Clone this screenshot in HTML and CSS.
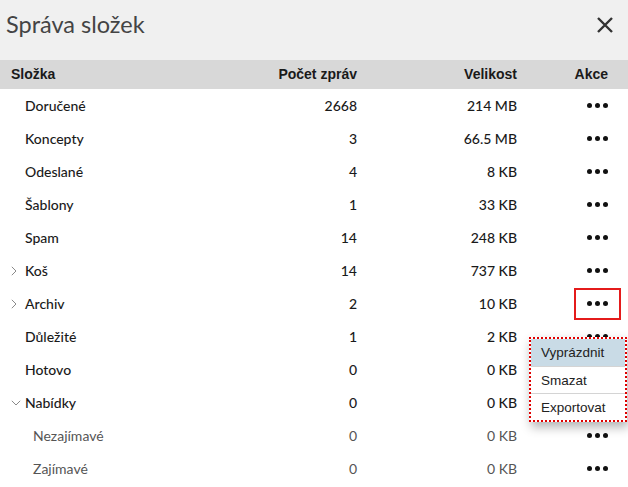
FILE: index.html
```html
<!DOCTYPE html>
<html lang="cs">
<head>
<meta charset="utf-8">
<link rel="stylesheet" href="styles.css">
</head>
<body>
<div class="dialog">
  <div class="titlebar">
    <h1 class="title">Správa složek</h1>
    <button class="close" aria-label="Zavřít">
      <svg width="18" height="18" viewBox="0 0 18 18"><path d="M2 2 L16 16 M16 2 L2 16" stroke="#333" stroke-width="2.4" fill="none"/></svg>
    </button>
  </div>
  <div class="table">
    <div class="row head">
      <div class="c-name">Složka</div>
      <div class="c-count">Počet zpráv</div>
      <div class="c-size">Velikost</div>
      <div class="c-act">Akce</div>
    </div>

    <div class="row"><div class="c-name"><span class="tw"></span>Doručené</div><div class="c-count">2668</div><div class="c-size">214 MB</div><div class="c-act"><span class="dots"><i></i><i></i><i></i></span></div></div>
    <div class="row"><div class="c-name"><span class="tw"></span>Koncepty</div><div class="c-count">3</div><div class="c-size">66.5 MB</div><div class="c-act"><span class="dots"><i></i><i></i><i></i></span></div></div>
    <div class="row"><div class="c-name"><span class="tw"></span>Odeslané</div><div class="c-count">4</div><div class="c-size">8 KB</div><div class="c-act"><span class="dots"><i></i><i></i><i></i></span></div></div>
    <div class="row"><div class="c-name"><span class="tw"></span>Šablony</div><div class="c-count">1</div><div class="c-size">33 KB</div><div class="c-act"><span class="dots"><i></i><i></i><i></i></span></div></div>
    <div class="row"><div class="c-name"><span class="tw"></span>Spam</div><div class="c-count">14</div><div class="c-size">248 KB</div><div class="c-act"><span class="dots"><i></i><i></i><i></i></span></div></div>
    <div class="row"><div class="c-name"><span class="tw"><svg width="6" height="10" viewBox="0 0 6 10"><path d="M0.8 0.8 L5 5 L0.8 9.2" stroke="#8a8a8a" stroke-width="1" fill="none"/></svg></span>Koš</div><div class="c-count">14</div><div class="c-size">737 KB</div><div class="c-act"><span class="dots"><i></i><i></i><i></i></span></div></div>
    <div class="row"><div class="c-name"><span class="tw"><svg width="6" height="10" viewBox="0 0 6 10"><path d="M0.8 0.8 L5 5 L0.8 9.2" stroke="#8a8a8a" stroke-width="1" fill="none"/></svg></span>Archiv</div><div class="c-count">2</div><div class="c-size">10 KB</div><div class="c-act"><span class="dots active"><i></i><i></i><i></i></span></div></div>
    <div class="row"><div class="c-name"><span class="tw"></span>Důležité</div><div class="c-count">1</div><div class="c-size">2 KB</div><div class="c-act"><span class="dots"><i></i><i></i><i></i></span></div></div>
    <div class="row"><div class="c-name"><span class="tw"></span>Hotovo</div><div class="c-count">0</div><div class="c-size">0 KB</div><div class="c-act"><span class="dots"><i></i><i></i><i></i></span></div></div>
    <div class="row"><div class="c-name"><span class="tw"><svg width="10" height="6" viewBox="0 0 10 6"><path d="M0.8 0.8 L5 5 L9.2 0.8" stroke="#8a8a8a" stroke-width="1" fill="none"/></svg></span>Nabídky</div><div class="c-count">0</div><div class="c-size">0 KB</div><div class="c-act"><span class="dots"><i></i><i></i><i></i></span></div></div>
    <div class="row child"><div class="c-name"><span class="tw"></span>Nezajímavé</div><div class="c-count">0</div><div class="c-size">0 KB</div><div class="c-act"><span class="dots"><i></i><i></i><i></i></span></div></div>
    <div class="row child"><div class="c-name"><span class="tw"></span>Zajímavé</div><div class="c-count">0</div><div class="c-size">0 KB</div><div class="c-act"><span class="dots"><i></i><i></i><i></i></span></div></div>
  </div>

  <ul class="menu">
    <li class="hover">Vyprázdnit</li>
    <li>Smazat</li>
    <li>Exportovat</li>
  </ul>
</div>
</body>
</html>
```

FILE: styles.css
```css
* { box-sizing: border-box; }
html, body { margin: 0; padding: 0; background: #fff; }
body { font-family: Lato, "Noto Sans", sans-serif; color: #1a1a1a; width: 628px; height: 487px; overflow: hidden; }
.dialog { position: relative; width: 628px; height: 487px; }
.titlebar {
  height: 60px;
  background: #f0f0f0;
  display: flex;
  align-items: center;
  justify-content: space-between;
  padding: 0 14px 0 6px;
}
.title { margin: 0; font-weight: 400; font-size: 23.5px; color: #444; padding-bottom: 13px; }
.close { border: 0; background: none; padding: 0; margin: 0 0 10px 0; width: 18px; height: 18px; display: block; }
.close svg { display: block; }

.row {
  display: grid;
  grid-template-columns: 237px 120px 160px 111px;
  height: 33px;
  align-items: center;
  font-size: 14px;
  font-weight: 500;
}
.row.head {
  height: 29px;
  background: #d8d8d8;
  font-family: "Liberation Sans", Arial, sans-serif;
  font-size: 14px;
  font-weight: 700;
  color: #1a1a1a;
  padding-bottom: 2px;
}
.row.head .c-name { padding-left: 11px; }
.row.head .c-act { text-align: right; padding-right: 20px; }

.c-name { padding-left: 11px; display: flex; align-items: center; }
.c-count, .c-size { text-align: right; }
.c-act { text-align: right; padding-right: 8px; }
.tw { width: 14px; display: inline-flex; align-items: center; }
.tw svg { display: block; }
.row.child { font-weight: 400; color: #555; }
.row.child .c-name { padding-left: 19px; }

.dots {
  display: inline-flex;
  justify-content: center;
  align-items: center;
  gap: 2.5px;
  width: 45px;
  height: 30px;
  vertical-align: middle;
}
.dots i { width: 5.2px; height: 5.2px; border-radius: 50%; background: #111; display: block; }
.dots.active { outline: 2px solid #e41b1b; outline-offset: -1px; }

.menu {
  position: absolute;
  left: 529px;
  top: 337px;
  width: 98px;
  margin: 0;
  padding: 0;
  list-style: none;
  background: #fff;
  border: 2px dotted #e00000;
  box-shadow: 2px 5px 10px rgba(0,0,0,0.3);
  font-family: "Liberation Sans", Arial, sans-serif;
  font-size: 13.5px;
  color: #222;
}
.menu li { height: 27px; line-height: 27px; padding-left: 10px; border-top: 1px solid #d4d4d4; }
.menu li:first-child { border-top: 0; height: 27px; }
.menu li.hover { background: #c9dbe6; }
```
